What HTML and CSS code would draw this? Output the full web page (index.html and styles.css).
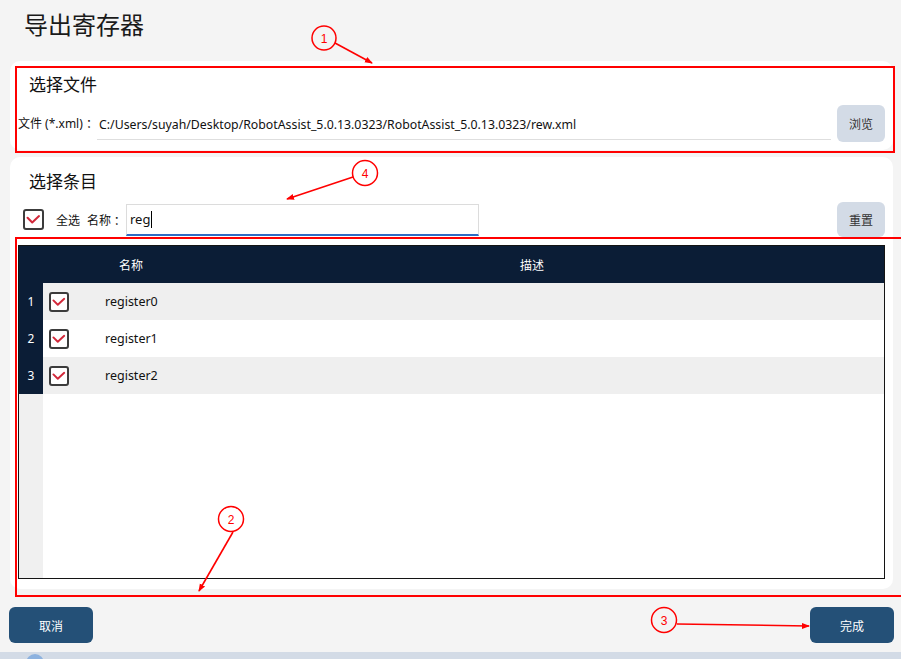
FILE: index.html
```html
<!DOCTYPE html>
<html lang="zh-CN">
<head>
<meta charset="utf-8">
<title>导出寄存器</title>
<link rel="stylesheet" href="styles.css">
</head>
<body>
<div class="page">
  <div class="title">导出寄存器</div>

  <section class="card card1">
    <div class="card-title">选择文件</div>
    <div class="file-row">
      <div class="file-label">文件 (*.xml) ：</div>
      <div class="file-input">C:/Users/suyah/Desktop/RobotAssist_5.0.13.0323/RobotAssist_5.0.13.0323/rew.xml</div>
      <div class="btn-light">浏览</div>
    </div>
  </section>

  <section class="card card2">
    <div class="card-title">选择条目</div>
    <div class="filter-row">
      <span class="checkbox big"><svg viewBox="0 0 20 20"><polyline points="3,8 8.5,13.5 16.5,6"/></svg></span>
      <span class="lbl all">全选</span>
      <span class="lbl name-lbl">名称 ：</span>
      <div class="search">reg<span class="caret"></span></div>
      <div class="btn-light reset">重置</div>
    </div>

    <div class="table">
      <div class="thead">
        <div class="th th-name">名称</div>
        <div class="th th-desc">描述</div>
      </div>
      <div class="tr odd">
        <div class="num">1</div>
        <span class="checkbox"><svg viewBox="0 0 20 20"><polyline points="3,8 8.5,13.5 16.5,6"/></svg></span>
        <div class="name">register0</div>
      </div>
      <div class="tr">
        <div class="num">2</div>
        <span class="checkbox"><svg viewBox="0 0 20 20"><polyline points="3,8 8.5,13.5 16.5,6"/></svg></span>
        <div class="name">register1</div>
      </div>
      <div class="tr odd">
        <div class="num">3</div>
        <span class="checkbox"><svg viewBox="0 0 20 20"><polyline points="3,8 8.5,13.5 16.5,6"/></svg></span>
        <div class="name">register2</div>
      </div>
      <div class="filler"><div class="filler-num"></div></div>
    </div>
  </section>

  <div class="footer">
    <div class="btn-dark">取消</div>
    <div class="btn-dark">完成</div>
  </div>

  <div class="strip"><span class="avatar"></span></div>
</div>

<svg class="annot" width="901" height="659" viewBox="0 0 901 659">
  <defs>
    <marker id="ah" markerWidth="8" markerHeight="8" refX="7" refY="4" orient="auto" markerUnits="userSpaceOnUse">
      <path d="M0,1 L8,4 L0,7 Z" fill="#f00"/>
    </marker>
  </defs>
  <rect x="16" y="67" width="878" height="85" fill="none" stroke="#f00" stroke-width="2"/>
  <rect x="16" y="238" width="900" height="358" fill="none" stroke="#f00" stroke-width="2"/>

  <circle cx="324" cy="38" r="12" fill="none" stroke="#f00" stroke-width="1.5"/>
  <text x="324" y="42.5" class="anum">1</text>
  <line x1="335" y1="43" x2="372" y2="63" stroke="#f00" stroke-width="1.6" marker-end="url(#ah)"/>

  <circle cx="365" cy="173" r="12.5" fill="none" stroke="#f00" stroke-width="1.5"/>
  <text x="365" y="177.5" class="anum">4</text>
  <line x1="353" y1="177" x2="287" y2="199" stroke="#f00" stroke-width="1.6" marker-end="url(#ah)"/>

  <circle cx="231" cy="519" r="12.5" fill="none" stroke="#f00" stroke-width="1.5"/>
  <text x="231" y="523.5" class="anum">2</text>
  <line x1="233" y1="532" x2="199" y2="591" stroke="#f00" stroke-width="1.6" marker-end="url(#ah)"/>

  <circle cx="664" cy="620" r="12.5" fill="none" stroke="#f00" stroke-width="1.5"/>
  <text x="664" y="624.5" class="anum">3</text>
  <line x1="677" y1="624" x2="809" y2="626" stroke="#f00" stroke-width="1.6" marker-end="url(#ah)"/>
</svg>
</body>
</html>
```
FILE: styles.css
```css
html, body {
  margin: 0;
  padding: 0;
}
body {
  width: 901px;
  height: 659px;
  overflow: hidden;
  position: relative;
  background: #f4f4f4;
  font-family: "Noto Sans", "Noto Sans CJK SC", sans-serif;
  color: #111;
}
.page {
  display: flex;
  flex-direction: column;
  height: 659px;
}
.title {
  font-family: "Noto Sans CJK SC", sans-serif;
  font-size: 24px;
  line-height: 32px;
  height: 32px;
  margin: 8px 0 0 24px;
  color: #1a1a1a;
}
.card {
  background: #fff;
  border-radius: 10px;
  margin-left: 10px;
  width: 883px;
  padding: 0 8px;
  box-sizing: border-box;
}
.card1 {
  margin-top: 21px;
  padding-top: 12px;
  padding-bottom: 8px;
}
.card2 {
  margin-top: 7px;
  padding-top: 13px;
  padding-bottom: 10px;
}
.card-title {
  font-family: "Noto Sans CJK SC", sans-serif;
  font-size: 17px;
  line-height: 22px;
  height: 22px;
  padding-left: 11px;
  color: #111;
}
.file-row {
  display: flex;
  align-items: flex-start;
  margin-top: 10px;
  height: 37px;
}
.file-label {
  width: 79px;
  font-size: 12px;
  line-height: 38px;
  white-space: nowrap;
}
.file-input {
  width: 734px;
  height: 31px;
  padding-top: 3px;
  line-height: 34px;
  box-sizing: content-box;
  border-bottom: 1px solid #dedede;
  font-size: 12.3px;
  padding-left: 2px;
  white-space: nowrap;
  overflow: hidden;
}
.btn-light {
  margin-left: 6px;
  width: 48px;
  height: 37px;
  background: #d3dbe6;
  border-radius: 6px;
  font-family: "Noto Sans CJK SC", sans-serif;
  font-size: 12px;
  color: #333;
  display: flex;
  align-items: center;
  justify-content: center;
  flex: none;
}
.filter-row {
  display: flex;
  align-items: center;
  margin-top: 10px;
  height: 35px;
}
.checkbox {
  width: 20px;
  height: 20px;
  box-sizing: border-box;
  border: 2px solid #3c3c3c;
  border-radius: 3px;
  background: #fff;
  display: inline-flex;
  flex: none;
}
.checkbox svg {
  width: 100%;
  height: 100%;
}
.checkbox polyline {
  fill: none;
  stroke: #d2283a;
  stroke-width: 2.4;
  stroke-linecap: round;
  stroke-linejoin: round;
}
.checkbox.big {
  width: 21px;
  height: 21px;
  margin-left: 5px;
}
.lbl {
  font-family: "Noto Sans CJK SC", sans-serif;
  font-size: 12px;
  white-space: nowrap;
}
.all {
  margin-left: 12px;
}
.name-lbl {
  margin-left: 7px;
  width: 39px;
}
.search {
  width: 353px;
  height: 32px;
  box-sizing: border-box;
  border: 1px solid #dcdcdc;
  border-bottom: 2px solid #2c6cc4;
  margin-left: 0;
  padding-left: 3px;
  font-size: 13px;
  line-height: 29px;
  display: flex;
  align-items: center;
}
.caret {
  display: inline-block;
  width: 1px;
  height: 17px;
  background: #000;
  margin-left: 1px;
}
.btn-light.reset {
  margin-left: auto;
  height: 35px;
  align-self: flex-start;
}
.table {
  margin-top: 8px;
  height: 334px;
  box-sizing: border-box;
  border: 1px solid #141414;
  display: flex;
  flex-direction: column;
}
.thead {
  height: 37px;
  flex: none;
  background: #0b1d36;
  color: #fff;
  display: flex;
  align-items: center;
  font-family: "Noto Sans CJK SC", sans-serif;
  font-size: 12px;
}
.th-name {
  margin-left: 24px;
  width: 176px;
  text-align: center;
}
.th-desc {
  width: 626px;
  text-align: center;
}
.tr {
  height: 37px;
  flex: none;
  display: flex;
  align-items: center;
  background: #fff;
}
.tr.odd {
  background: #efefef;
}
.num {
  width: 24px;
  height: 100%;
  background: #0b1d36;
  color: #fff;
  font-size: 12px;
  display: flex;
  align-items: center;
  justify-content: center;
  flex: none;
}
.tr .checkbox {
  margin-left: 6px;
}
.name {
  margin-left: 36px;
  font-size: 12.5px;
}
.filler {
  flex: 1;
  display: flex;
  background: #fff;
}
.filler-num {
  width: 24px;
  background: #f0f0f0;
}
.footer {
  margin-top: 18px;
  display: flex;
  justify-content: space-between;
  padding: 0 7px 0 9px;
}
.btn-dark {
  width: 84px;
  height: 36px;
  background: #245077;
  border-radius: 6px;
  color: #fff;
  font-family: "Noto Sans CJK SC", sans-serif;
  font-size: 12px;
  display: flex;
  align-items: center;
  justify-content: center;
}
.strip {
  margin-top: 9px;
  flex: 1;
  background: #d3dbe6;
  overflow: hidden;
  padding: 2px 0 0 26px;
}
.avatar {
  display: block;
  width: 18px;
  height: 18px;
  border-radius: 50%;
  background: #8db2df;
}
.annot {
  position: absolute;
  left: 0;
  top: 0;
  pointer-events: none;
}
.anum {
  fill: #f00;
  font-family: "Liberation Sans", sans-serif;
  font-size: 12px;
  text-anchor: middle;
}
```
